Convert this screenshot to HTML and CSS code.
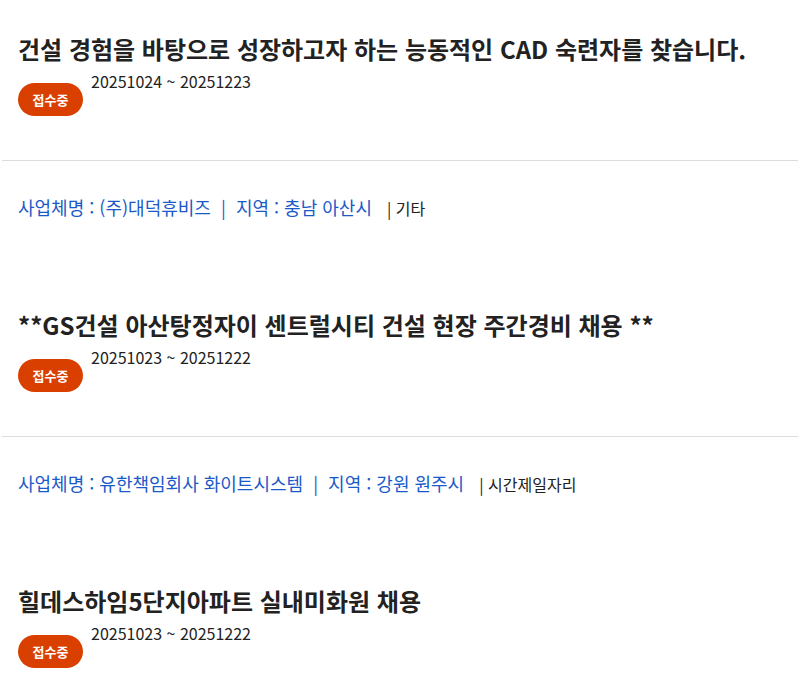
FILE: index.html
```html
<!DOCTYPE html>
<html lang="ko">
<head>
<meta charset="utf-8">
<title>채용공고</title>
<link rel="stylesheet" href="styles.css">
</head>
<body>
<ul class="job-list">
  <li class="job">
    <div class="post">
      <h2 class="title">건설 경험을 바탕으로 성장하고자 하는 능동적인 CAD 숙련자를 찾습니다.</h2>
      <div class="row">
        <span class="badge">접수중</span>
        <span class="date">20251024 ~ 20251223</span>
      </div>
    </div>
    <div class="meta">
      <span class="info">사업체명 : (주)대덕휴비즈 &nbsp;|&nbsp; 지역 : 충남 아산시</span>
      <span class="type">| 기타</span>
    </div>
  </li>
  <li class="job">
    <div class="post">
      <h2 class="title">**GS건설 아산탕정자이 센트럴시티 건설 현장 주간경비 채용 **</h2>
      <div class="row">
        <span class="badge">접수중</span>
        <span class="date">20251023 ~ 20251222</span>
      </div>
    </div>
    <div class="meta">
      <span class="info">사업체명 : 유한책임회사 화이트시스템 &nbsp;|&nbsp; 지역 : 강원 원주시</span>
      <span class="type">| 시간제일자리</span>
    </div>
  </li>
  <li class="job">
    <div class="post">
      <h2 class="title">힐데스하임5단지아파트 실내미화원 채용</h2>
      <div class="row">
        <span class="badge">접수중</span>
        <span class="date">20251023 ~ 20251222</span>
      </div>
    </div>
  </li>
</ul>
</body>
</html>
```

FILE: styles.css
```css
html, body {
  margin: 0;
  padding: 0;
  background: #fff;
}
body {
  font-family: "Noto Sans CJK KR", "Noto Sans", sans-serif;
  color: #222;
}
.job-list {
  list-style: none;
  margin: 0 2px;
  padding: 0;
}
.post {
  padding: 31px 16px 44px;
  border-bottom: 1px solid #dddddd;
}
.title {
  margin: 0;
  font-size: 24px;
  line-height: 36px;
  font-weight: 700;
  color: #222;
  white-space: nowrap;
}
.row {
  display: flex;
  align-items: flex-start;
  margin-top: 2px;
}
.badge {
  margin-top: 14px;
  width: 65px;
  height: 33px;
  border-radius: 17px;
  background: #d94000;
  color: #fff;
  font-size: 13px;
  font-weight: 700;
  display: flex;
  align-items: center;
  justify-content: center;
}
.date {
  margin-left: 8px;
  font-size: 16px;
  line-height: 24px;
  color: #222;
}
.meta {
  padding: 33px 16px 55px;
  font-size: 18px;
  line-height: 26px;
  white-space: nowrap;
}
.info {
  color: #1a5ac8;
}
.type {
  margin-left: 10px;
  font-size: 16px;
  color: #222;
}
```
